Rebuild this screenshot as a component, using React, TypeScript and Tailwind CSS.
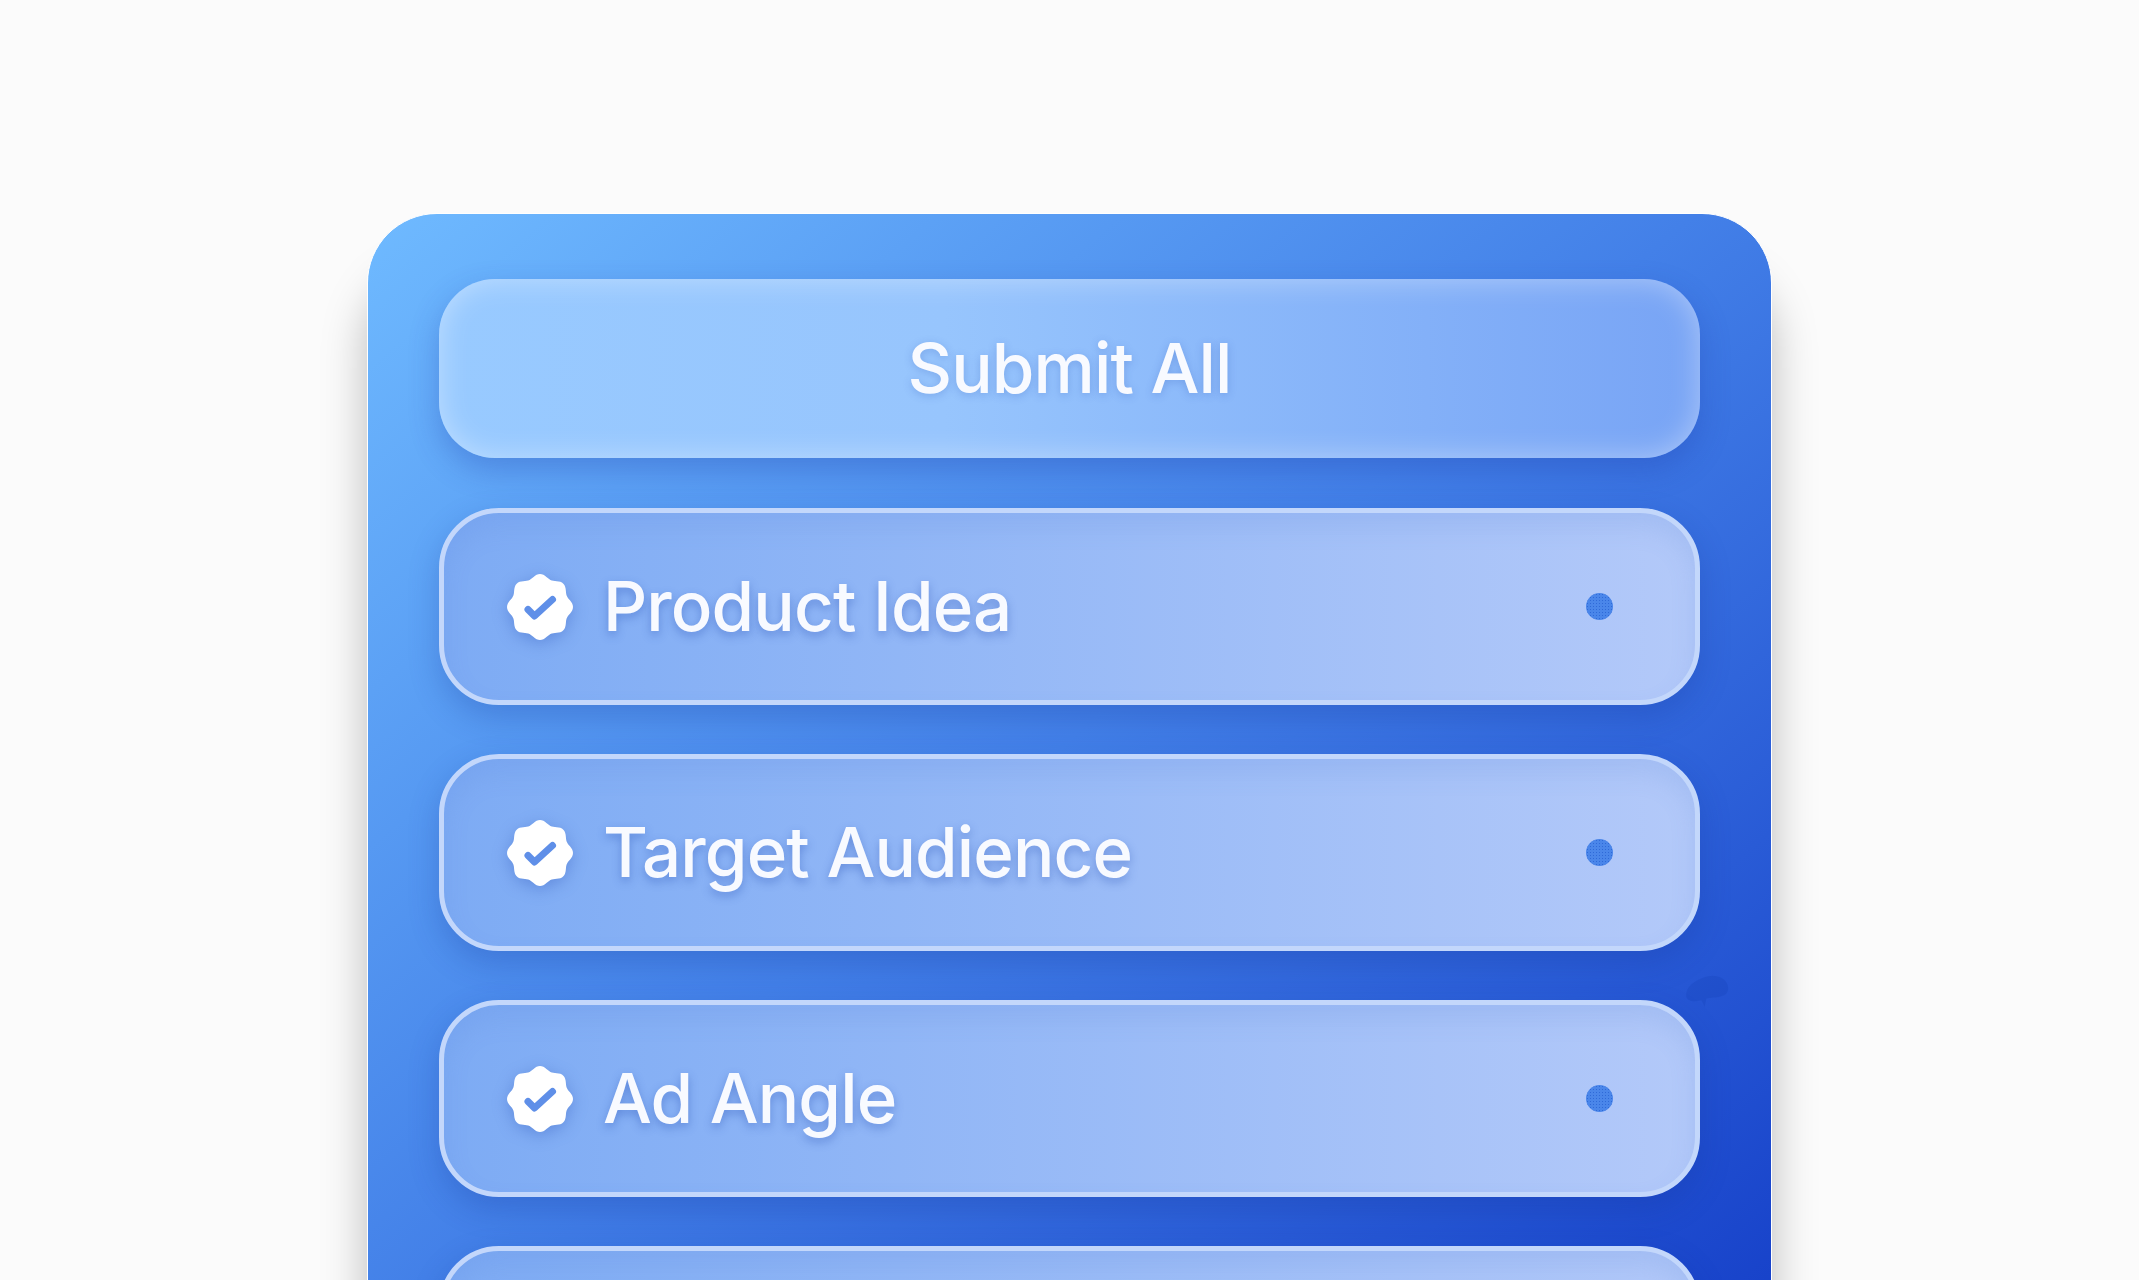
const badgePath = (() => {
  const pts: string[] = [];
  for (let i = 0; i < 120; i++) {
    const a = (i / 120) * Math.PI * 2 - Math.PI / 2;
    const r = 31 + 2 * Math.cos(8 * (a + Math.PI / 2));
    pts.push(`${(33 + r * Math.cos(a)).toFixed(2)} ${(33 + r * Math.sin(a)).toFixed(2)}`);
  }
  return "M" + pts.join("L") + "Z";
})();

function Badge() {
  return (
    <svg width="66" height="66" viewBox="0 0 66 66" className="shrink-0 drop-shadow-[0_4px_8px_rgba(40,80,180,0.35)]">
      <path d={badgePath} fill="#ffffff" />
      <path d="M21 35.5 L27.5 42 L45.5 25.5" fill="none" stroke="#5f8fe8" strokeWidth="7" strokeLinecap="round" strokeLinejoin="round" />
    </svg>
  );
}

function Row({ label }: { label: string }) {
  return (
    <div className="flex h-[197px] shrink-0 items-center rounded-[60px] border-[5px] border-[#c3d7fb] bg-linear-to-r from-[#7dabf4] to-[#b3c9f9] pl-[63px] pr-[82px] shadow-[inset_0_14px_24px_rgba(90,130,220,0.16),0_12px_30px_rgba(20,50,150,0.25)]">
      <Badge />
      <span className="ml-[30px] -mt-[2px] text-[69px] leading-[80px] font-medium tracking-[-0.9px] text-[#f8faff] [text-shadow:0_4px_10px_rgba(40,80,180,0.4)]">
        {label}
      </span>
      <div className="ml-auto h-[27px] w-[27px] rounded-full bg-[#4a86ea] bg-[radial-gradient(circle,#2f6ad8_0.7px,transparent_1px)] bg-size-[3px_3px]" />
    </div>
  );
}

export default function App() {
  return (
    <div className="h-[1280px] w-full overflow-hidden bg-[#fbfbfb] pt-[213px] font-['Inter','Liberation_Sans',sans-serif]">
      <div className="relative mx-auto flex h-[1300px] w-[1405px] flex-col gap-[49px] rounded-[70px] border border-[#ffffff] bg-linear-[140deg] from-[#6fbaff] via-[#4380e8] via-45% to-[#0f36c4] px-[71px] pt-[65px] shadow-[0_60px_45px_rgba(0,0,0,0.26)]">
        <svg width="50" height="40" viewBox="0 0 60 44" className="absolute left-[1315px] top-[758px] opacity-20">
          <path d="M4 28 C2 14 18 6 30 3 C44 0 56 8 54 20 C52 30 36 28 28 30 L26 40 L22 32 C14 34 6 34 4 28Z" fill="#0f3bb0" />
        </svg>
        <button className="mb-px flex h-[179px] shrink-0 items-center justify-center rounded-[56px] bg-linear-to-r from-[#98caff] via-[#97c5fd] via-40% to-[#78a4f5] shadow-[inset_0_0_30px_rgba(255,255,255,0.4),0_12px_30px_rgba(30,60,170,0.3)]">
          <span className="-mt-[2px] text-[69px] leading-[80px] font-medium tracking-[-0.9px] text-[#f8faff] [text-shadow:0_2px_8px_rgba(40,80,180,0.25)]">Submit All</span>
        </button>
        <Row label="Product Idea" />
        <Row label="Target Audience" />
        <Row label="Ad Angle" />
        <Row label="" />
      </div>
    </div>
  );
}
